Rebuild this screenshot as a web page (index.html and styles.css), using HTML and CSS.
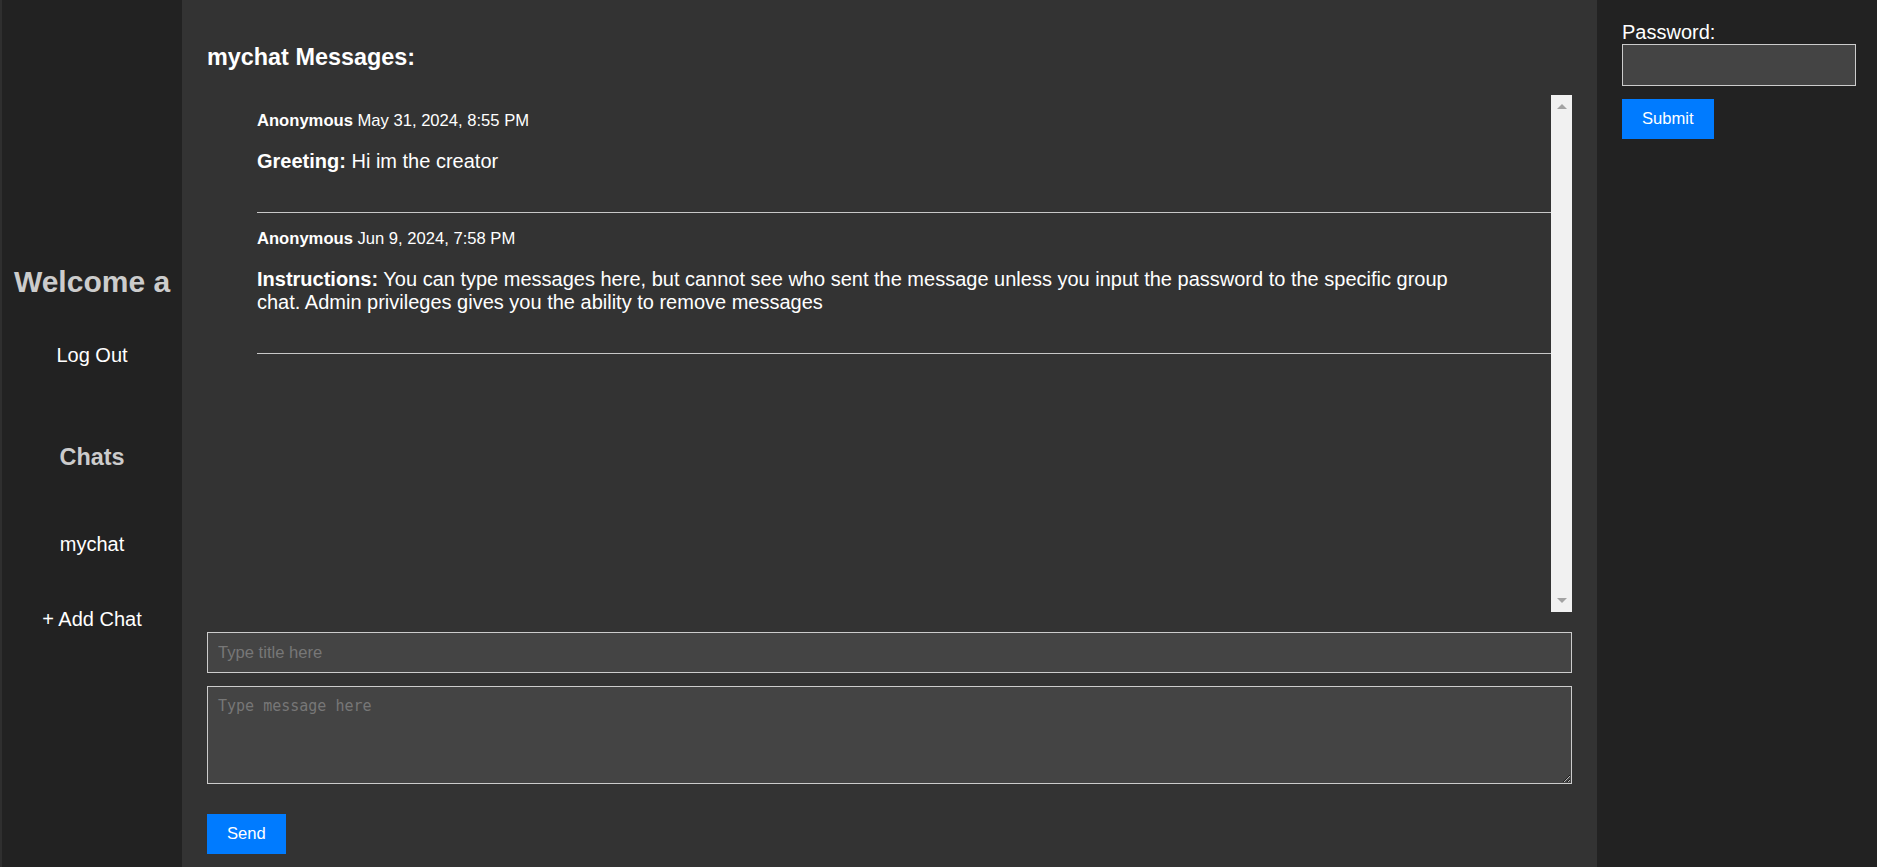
FILE: index.html
```html
<!DOCTYPE html>
<html lang="en">
<head>
<meta charset="utf-8">
<title>mychat</title>
<link rel="stylesheet" href="styles.css">
</head>
<body>
<div class="app">
  <aside class="sidebar">
    <h2 class="welcome">Welcome a</h2>
    <a class="side-link logout">Log Out</a>
    <h3 class="chats-title">Chats</h3>
    <a class="side-link chat-link">mychat</a>
    <a class="side-link add-chat">+ Add Chat</a>
  </aside>
  <main class="main">
    <h3 class="title">mychat Messages:</h3>
    <div class="messages-box">
      <div class="messages">
        <div class="message">
          <div class="meta"><strong>Anonymous</strong> May 31, 2024, 8:55 PM</div>
          <p class="text"><strong>Greeting:</strong> Hi im the creator</p>
        </div>
        <div class="message">
          <div class="meta"><strong>Anonymous</strong> Jun 9, 2024, 7:58 PM</div>
          <p class="text"><strong>Instructions:</strong> You can type messages here, but cannot see who sent the message unless you input the password to the specific group chat. Admin privileges gives you the ability to remove messages</p>
        </div>
      </div>
      <div class="scrollbar" aria-hidden="true">
        <span class="arrow up"></span>
        <span class="arrow down"></span>
      </div>
    </div>
    <form class="compose">
      <input class="field title-input" type="text" placeholder="Type title here">
      <textarea class="field area" placeholder="Type message here"></textarea>
      <button class="btn send" type="button">Send</button>
    </form>
  </main>
  <aside class="auth">
    <label class="pw-label">Password:</label>
    <input class="field pw" type="password">
    <button class="btn submit" type="button">Submit</button>
  </aside>
</div>
</body>
</html>
```
FILE: styles.css
```css
* { box-sizing: border-box; }
html, body { margin: 0; height: 100%; }
body {
  background: #333;
  font-family: "Liberation Sans", Arial, sans-serif;
  font-size: 20px;
  color: #fff;
  overflow: hidden;
}
.app { display: flex; height: 867px; }

.sidebar {
  width: 182px;
  flex: none;
  background: #222;
  border-left: 2px solid #2f2f2f;
  display: flex;
  flex-direction: column;
  align-items: center;
  padding-top: 264px;
  text-align: center;
}
.welcome {
  margin: 0;
  font-size: 30px;
  line-height: 35px;
  color: #ccc;
  white-space: nowrap;
}
.side-link { color: #fff; line-height: 23px; }
.logout { margin-top: 45px; }
.chats-title {
  margin: 77px 0 0;
  font-size: 23.4px;
  line-height: 27px;
  color: #ccc;
}
.chat-link { margin-top: 62px; }
.add-chat { margin-top: 52px; }

.main {
  flex: 1;
  min-width: 0;
  display: flex;
  flex-direction: column;
  padding: 0 25px;
  background: #333;
}
.title {
  margin: 44px 0 24px;
  font-size: 23.4px;
  line-height: 27px;
}
.messages-box {
  flex: none;
  height: 517px;
  display: flex;
}
.messages {
  flex: 1;
  min-width: 0;
  overflow: hidden;
  padding-left: 50px;
}
.scrollbar {
  width: 21px;
  flex: none;
  background: #f1f1f1;
  display: flex;
  flex-direction: column;
  justify-content: space-between;
  align-items: center;
  padding: 9px 0;
}
.arrow {
  width: 0;
  height: 0;
  border-left: 5px solid transparent;
  border-right: 5px solid transparent;
}
.arrow.up { border-bottom: 5px solid #a3a3a3; }
.arrow.down { border-top: 5px solid #a3a3a3; }

.message {
  padding: 16px 0 39px;
  border-bottom: 1px solid #c8c8c8;
}
.meta { font-size: 16.6px; line-height: 19px; }
.text {
  margin: 20px 0 0;
  line-height: 23px;
  padding-right: 75px;
}

.compose {
  display: flex;
  flex-direction: column;
  align-items: flex-start;
  margin: 20px 0 0;
}
.field {
  background: #444;
  border: 1px solid #ccc;
  color: #fff;
  padding: 10px;
  font-family: "Liberation Sans", Arial, sans-serif;
  font-size: 16.6px;
  outline: none;
}
.field::placeholder { color: #777; }
.title-input { width: 100%; height: 41px; }
.area {
  width: 100%;
  height: 98px;
  margin-top: 13px;
  font-family: "DejaVu Sans Mono", "Liberation Mono", monospace;
  font-size: 15px;
}
.btn {
  background: #007bff;
  color: #fff;
  border: 0;
  height: 40px;
  padding: 0 20px;
  font-family: "Liberation Sans", Arial, sans-serif;
  font-size: 16.6px;
}
.send { margin-top: 30px; }

.auth {
  width: 280px;
  flex: none;
  background: #222;
  padding: 21px 21px 0 25px;
  display: flex;
  flex-direction: column;
  align-items: flex-start;
}
.pw-label { line-height: 23px; }
.pw { width: 234px; height: 42px; }
.submit { margin-top: 13px; }
```
